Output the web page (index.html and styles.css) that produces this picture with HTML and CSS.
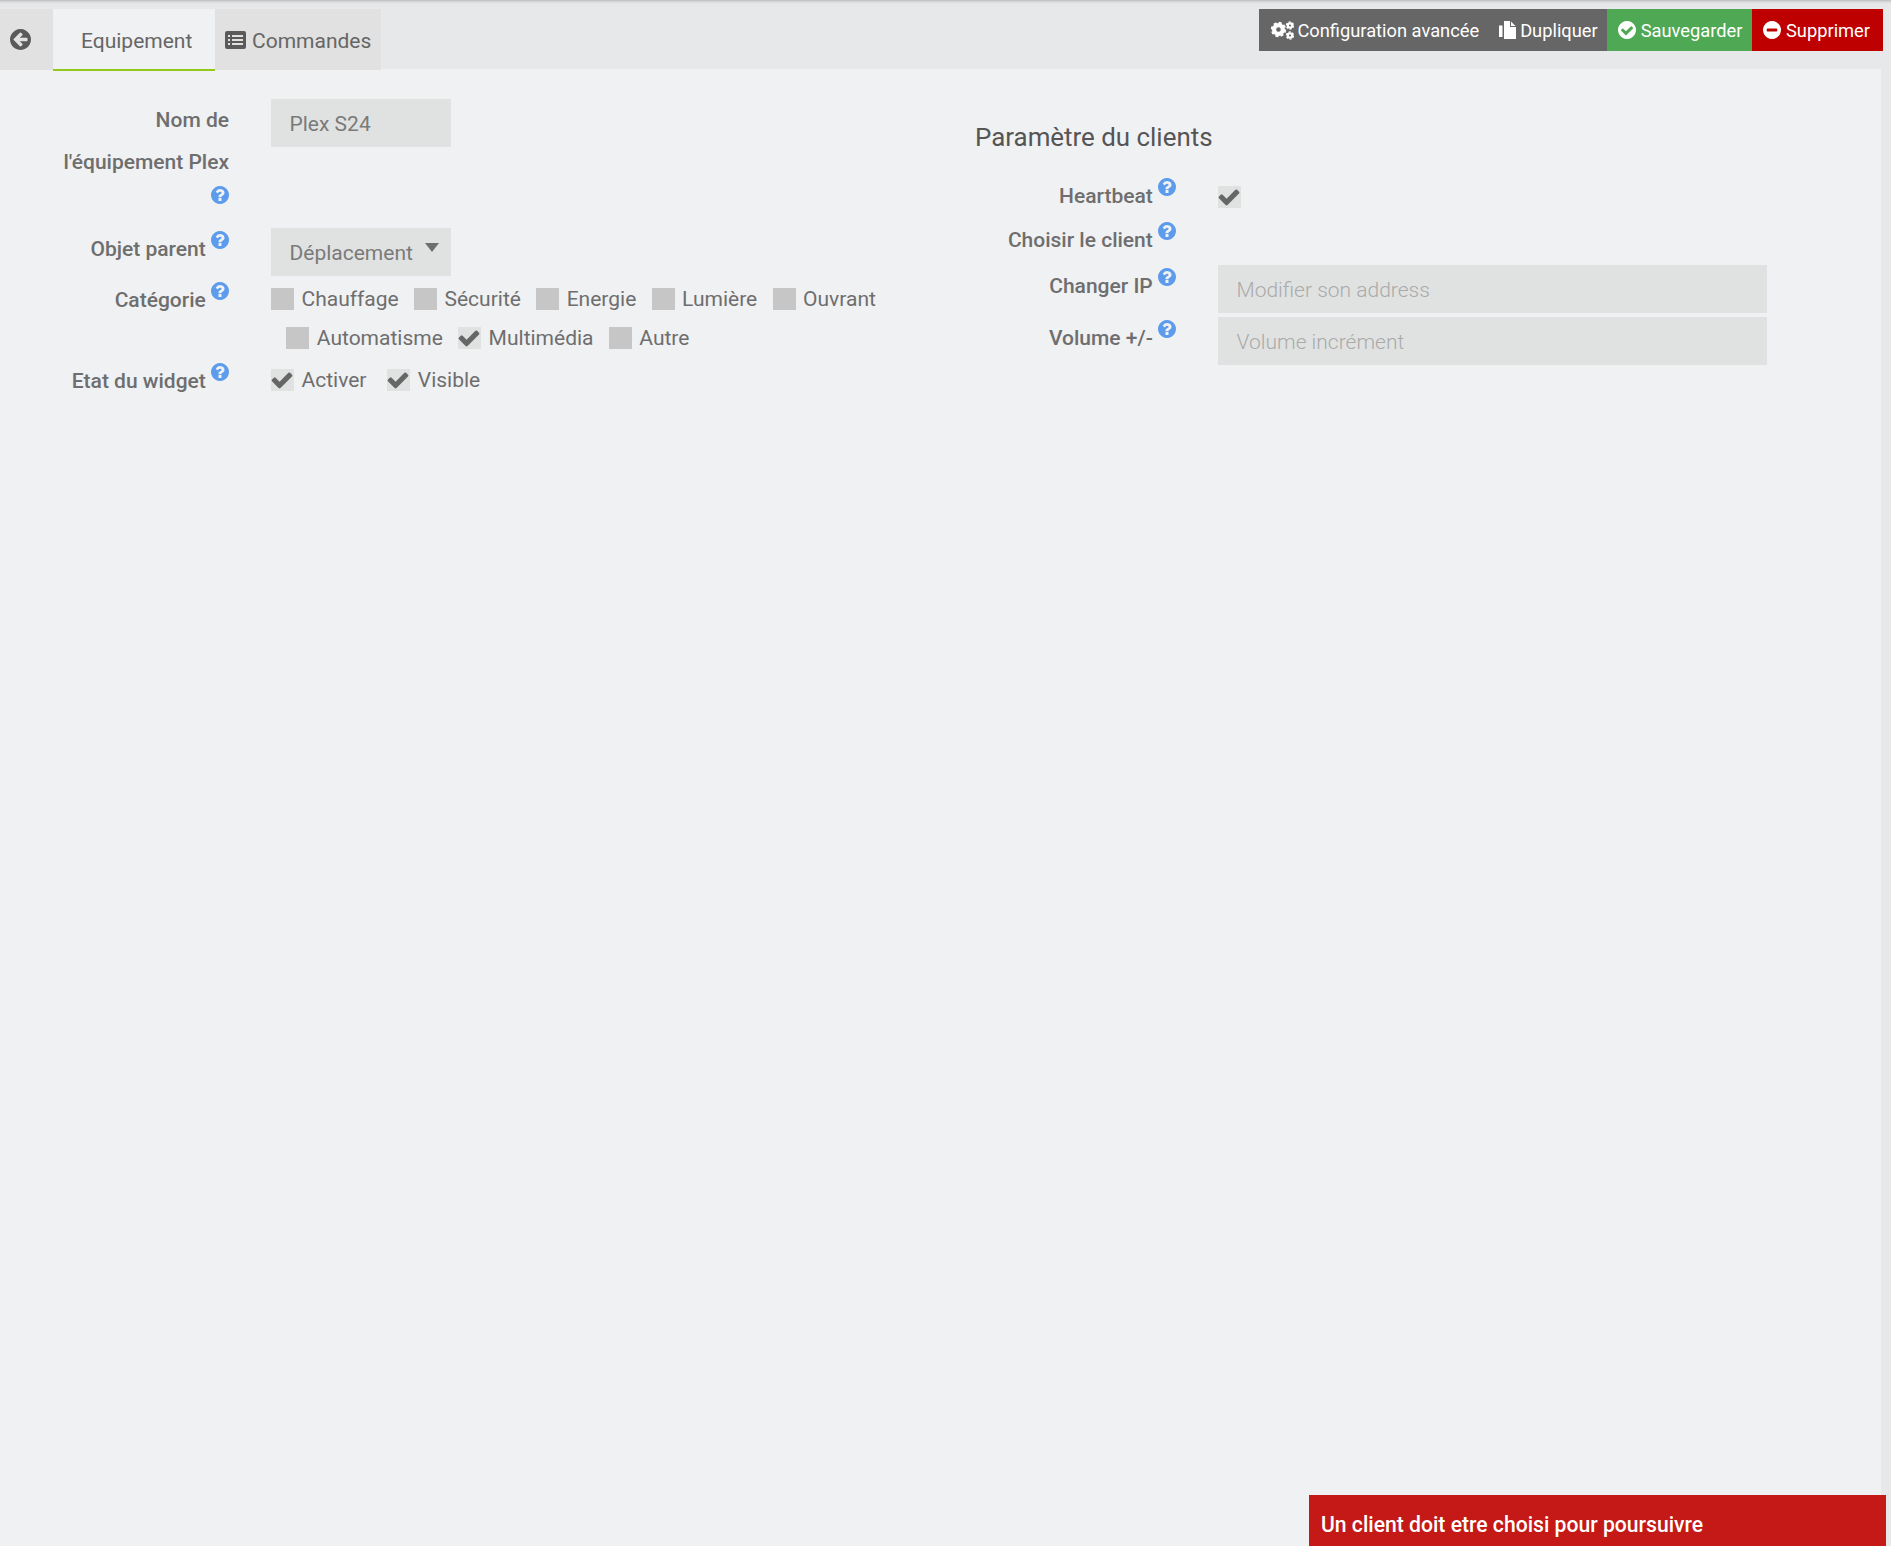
FILE: index.html
```html
<!DOCTYPE html>
<html lang="fr">
<head>
<meta charset="utf-8">
<title>Equipement Plex</title>
<link rel="stylesheet" href="styles.css">
</head>
<body>
<svg class="defs" aria-hidden="true">
  <symbol id="i-help" viewBox="128 128 1536 1536"><path d="M1024 1376v-192q0-14-9-23t-23-9h-192q-14 0-23 9t-9 23v192q0 14 9 23t23 9h192q14 0 23-9t9-23zm256-672q0-88-55.5-163t-138.5-116-170-41q-243 0-371 213-15 24 8 42l132 100q7 6 19 6 16 0 25-12 53-68 86-92 34-24 86-24 48 0 85.5 26t37.5 59q0 38-20 61t-68 45q-63 28-115.5 86.5t-52.5 125.5v36q0 14 9 23t23 9h192q14 0 23-9t9-23q0-19 21.5-49.5t54.5-49.5q32-18 49-28.5t46-35 44.5-48 28-60.5 12.5-81zm384 192q0 209-103 385.5t-279.5 279.5-385.5 103-385.5-103-279.5-279.5-103-385.5 103-385.5 279.5-279.5 385.5-103 385.5 103 279.5 279.5 103 385.5z"/></symbol>
  <symbol id="i-back" viewBox="128 128 1536 1536"><path d="M1408 960v-128q0-26-19-45t-45-19h-502l189-189q19-19 19-45t-19-45l-91-91q-18-18-45-18t-45 18l-362 362-91 91q-18 18-18 45t18 45l91 91 362 362q18 18 45 18t45-18l91-91q18-18 18-45t-18-45l-189-189h502q26 0 45-19t19-45zm256-64q0 209-103 385.5t-279.5 279.5-385.5 103-385.5-103-279.5-279.5-103-385.5 103-385.5 279.5-279.5 385.5-103 385.5 103 279.5 279.5 103 385.5z"/></symbol>
  <symbol id="i-ok" viewBox="128 128 1536 1536"><path d="M1412 734q0-28-18-46l-91-90q-19-19-45-19t-45 19l-408 407-226-226q-19-19-45-19t-45 19l-91 90q-18 18-18 46 0 27 18 45l362 362q19 19 45 19 27 0 46-19l543-543q18-18 18-45zm252 162q0 209-103 385.5t-279.5 279.5-385.5 103-385.5-103-279.5-279.5-103-385.5 103-385.5 279.5-279.5 385.5-103 385.5 103 279.5 279.5 103 385.5z"/></symbol>
  <symbol id="i-minus" viewBox="128 128 1536 1536"><path d="M1344 960v-128q0-26-19-45t-45-19h-768q-26 0-45 19t-19 45v128q0 26 19 45t45 19h768q26 0 45-19t19-45zm320-64q0 209-103 385.5t-279.5 279.5-385.5 103-385.5-103-279.5-279.5-103-385.5 103-385.5 279.5-279.5 385.5-103 385.5 103 279.5 279.5 103 385.5z"/></symbol>
  <symbol id="i-check" viewBox="0 0 1792 1792"><path d="M1671 566q0 40-28 68l-724 724-136 136q-28 28-68 28t-68-28l-136-136-362-362q-28-28-28-68t28-68l136-136q28-28 68-28t68 28l294 295 656-657q28-28 68-28t68 28l136 136q28 28 28 68z"/></symbol>
  <symbol id="i-list" viewBox="0 0 21 18"><path fill-rule="evenodd" d="M2 0h17a2 2 0 0 1 2 2v14a2 2 0 0 1-2 2H2a2 2 0 0 1-2-2V2a2 2 0 0 1 2-2zM3 4v2h2V4zM7 4v2h11V4zM3 8v2h2V8zM7 8v2h11V8zM3 12v2h2v-2zM7 12v2h11v-2z"/></symbol>
  <symbol id="i-copy" viewBox="0 0 17 18"><path d="M0 4.5H3.5V16H0zM5 0H11V6H17V18H5zM12 0.5L16.5 5H12z"/></symbol>
  <symbol id="i-cogs" viewBox="0 0 24 20">
    <circle cx="8.5" cy="9.5" r="4.4" fill="none" stroke="currentColor" stroke-width="4.2"/>
    <circle cx="8.5" cy="9.5" r="6.6" fill="none" stroke="currentColor" stroke-width="2.2" stroke-dasharray="3 2.18"/>
    <circle cx="20" cy="5.5" r="2.2" fill="none" stroke="currentColor" stroke-width="2.2"/>
    <circle cx="20" cy="5.5" r="3.6" fill="none" stroke="currentColor" stroke-width="1.2" stroke-dasharray="2.2 1.57"/>
    <circle cx="20" cy="15.5" r="2.2" fill="none" stroke="currentColor" stroke-width="2.2"/>
    <circle cx="20" cy="15.5" r="3.6" fill="none" stroke="currentColor" stroke-width="1.2" stroke-dasharray="2.2 1.57"/>
  </symbol>
</svg>

<header class="topbar">
  <nav class="tabs">
    <a class="tab tab-back"><svg class="icon icon-back"><use href="#i-back"/></svg></a>
    <a class="tab tab-active">Equipement</a>
    <a class="tab tab-cmd"><svg class="icon icon-list"><use href="#i-list"/></svg>Commandes</a>
  </nav>
  <div class="actions">
    <a class="btn btn-gray btn-config"><svg class="icon icon-cogs"><use href="#i-cogs"/></svg>Configuration avancée</a>
    <a class="btn btn-gray btn-dup"><svg class="icon icon-copy"><use href="#i-copy"/></svg>Dupliquer</a>
    <a class="btn btn-green"><svg class="icon icon-btn"><use href="#i-ok"/></svg>Sauvegarder</a>
    <a class="btn btn-red"><svg class="icon icon-btn"><use href="#i-minus"/></svg>Supprimer</a>
  </div>
</header>

<main class="panel">
  <section class="form form-left">
    <div class="row row-name">
      <label class="lbl">Nom de l'équipement Plex <svg class="help"><use href="#i-help"/></svg></label>
      <input class="field field-short" type="text" value="Plex S24">
    </div>
    <div class="row row-parent">
      <label class="lbl">Objet parent <svg class="help"><use href="#i-help"/></svg></label>
      <div class="field field-short select"><span>Déplacement</span><i class="caret"></i></div>
    </div>
    <div class="row row-cat">
      <label class="lbl">Catégorie <svg class="help"><use href="#i-help"/></svg></label>
      <div class="checks">
        <span class="check first"><i class="box"></i>Chauffage</span>
        <span class="check"><i class="box"></i>Sécurité</span>
        <span class="check"><i class="box"></i>Energie</span>
        <span class="check"><i class="box"></i>Lumière</span>
        <span class="check"><i class="box"></i>Ouvrant</span>
        <span class="check"><i class="box"></i>Automatisme</span>
        <span class="check"><i class="box on"><svg class="tick"><use href="#i-check"/></svg></i>Multimédia</span>
        <span class="check"><i class="box"></i>Autre</span>
      </div>
    </div>
    <div class="row row-state">
      <label class="lbl">Etat du widget <svg class="help"><use href="#i-help"/></svg></label>
      <div class="checks">
        <span class="check first"><i class="box on"><svg class="tick"><use href="#i-check"/></svg></i>Activer</span>
        <span class="check"><i class="box on"><svg class="tick"><use href="#i-check"/></svg></i>Visible</span>
      </div>
    </div>
  </section>

  <section class="form form-right">
    <h2 class="title">Paramètre du clients</h2>
    <div class="row row-heart">
      <label class="lbl lbl-right">Heartbeat <svg class="help"><use href="#i-help"/></svg></label>
      <i class="box on box-heart"><svg class="tick"><use href="#i-check"/></svg></i>
    </div>
    <div class="row row-client">
      <label class="lbl lbl-right">Choisir le client <svg class="help"><use href="#i-help"/></svg></label>
    </div>
    <div class="row row-ip">
      <label class="lbl lbl-right lbl-low">Changer IP <svg class="help"><use href="#i-help"/></svg></label>
      <input class="field field-long" type="text" placeholder="Modifier son address">
    </div>
    <div class="row row-vol">
      <label class="lbl lbl-right lbl-low">Volume +/- <svg class="help"><use href="#i-help"/></svg></label>
      <input class="field field-long" type="text" placeholder="Volume incrément">
    </div>
  </section>
</main>

<div class="toast">Un client doit etre choisi pour poursuivre</div>
</body>
</html>
```

FILE: styles.css
```css
* { box-sizing: border-box; }
html, body { margin: 0; height: 100%; }
body {
  height: 1546px;
  overflow: hidden;
  background: #e7e8ea;
  color: #6e6e6e;
  font-family: Roboto, "Liberation Sans", sans-serif;
  font-size: 21px;
  display: flex;
  flex-direction: column;
}
.defs { display: none; }
.icon { fill: currentColor; flex: none; }

.topbar {
  height: 69px;
  flex: none;
  display: flex;
  justify-content: space-between;
  align-items: flex-start;
  padding: 9px 8px 0 0;
  background: linear-gradient(#bdbdbd 0, #dcdcdc 2px, #e7e8ea 4px);
}
.tabs { display: flex; height: 62px; position: relative; z-index: 1; }
.tab {
  display: flex;
  align-items: center;
  height: 61px;
  padding-top: 2px;
  color: #666;
  background: #e0e1e0;
}
.tab-back { width: 53px; padding-left: 10px; padding-top: 0; }
.icon-back { width: 21px; height: 21px; color: #5a5a5a; }
.tab-active {
  width: 162px;
  height: 62px;
  padding-top: 3px;
  padding-left: 28px;
  background: #f0f1f3;
  border-bottom: 2px solid #93ca1a;
}
.tab-cmd { width: 166px; padding-left: 10px; }
.icon-list { width: 21px; height: 18px; margin-right: 6px; margin-bottom: 2px; color: #5a5a5a; }

.actions { display: flex; height: 42px; color: #fff; font-size: 18.3px; }
.btn { display: flex; align-items: center; height: 42px; color: #fff; white-space: nowrap; }
.btn-gray { background: #666; }
.btn-config { padding: 0 10px 0 11px; }
.btn-dup { padding: 0 9px 0 10px; }
.btn-green { background: #4fa954; padding: 0 10px 0 11px; }
.btn-red { background: #bf0000; padding: 0 13px 0 10.5px; }
.icon-cogs { width: 24px; height: 20px; margin-right: 3.5px; }
.icon-copy { width: 17px; height: 18px; margin-right: 4px; }
.icon-btn { width: 18px; height: 18px; margin-right: 5px; }

.panel {
  flex: 1;
  width: 1881px;
  background: #f0f1f3;
  display: flex;
  align-items: flex-start;
  padding-top: 29px;
}
.form-left { width: 976px; flex: none; }
.form-right { flex: 1; }

.row { display: flex; align-items: flex-start; }
.lbl {
  flex: none;
  margin-left: 54px;
  width: 175px;
  margin-right: 42px;
  padding-top: 1px;
  text-align: right;
  font-weight: 500;
  line-height: 42px;
  color: #6e6e6e;
}
.row-parent .lbl, .row-cat .lbl, .lbl-right { line-height: 40px; }
.row-state .lbl { line-height: 40px; padding-top: 0; }
.lbl-right { margin-left: 0; width: 200px; padding-top: 0; }
.lbl-low { margin-top: 1px; }
.help {
  width: 18px;
  height: 18px;
  margin-left: 0;
  fill: #5d9cec;
  vertical-align: 7px;
}

.row-name { height: 130px; }
.row-name .field { margin-top: 1px; }
.row-parent { height: 48px; }
.row-cat { margin-top: 3px; }
.row-state { margin-top: 12px; }
.row-heart { margin-top: 21px; }
.row-client { margin-top: 4px; height: 40px; }
.row-ip { margin-top: 5px; }
.row-vol { margin-top: 4px; }

.field {
  height: 48px;
  border: 0;
  border-radius: 0;
  outline: 0;
  background: #e0e2e1;
  padding: 2px 18.5px 0;
  font: inherit;
  color: #7a7a7a;
}
.field::placeholder { color: #aaa; opacity: 1; font-weight: 300; }
.field-short { width: 180px; }
.field-long { width: 549px; }
.select { display: flex; align-items: center; padding-right: 0; }
.caret {
  width: 0;
  height: 0;
  margin: 0 0 12px 12px;
  border-left: 7.5px solid transparent;
  border-right: 7.5px solid transparent;
  border-top: 9px solid #6e6e6e;
}

.checks { display: flex; flex-wrap: wrap; width: 640px; row-gap: 17px; padding-top: 9px; }
.row-state .checks { padding-top: 8px; column-gap: 5.5px; }
.check { display: inline-flex; align-items: center; height: 22px; margin-left: 15.3px; white-space: nowrap; }
.check.first { margin-left: 0; }
.box {
  display: block;
  flex: none;
  width: 23px;
  height: 22px;
  margin-right: 7.5px;
  background: #c6c6c6;
}
.box.on { background: #e0e2e1; }
.tick { display: block; width: 24px; height: 24px; margin-left: -1px; margin-top: -1px; fill: #666; }
.box-heart { margin-top: 10px; }

.title {
  margin: 0 0 0 -1px;
  padding-top: 23px;
  height: 57px;
  font-weight: 400;
  font-size: 25.9px;
  line-height: 32px;
  color: #555;
}
.toast {
  position: fixed;
  left: 1309px;
  top: 1495px;
  width: 577px;
  height: 51px;
  padding: 13px 0 0 12px;
  background: #c41916;
  color: #fff;
  font-size: 21.15px;
  font-weight: 500;
  line-height: 34px;
}
```
